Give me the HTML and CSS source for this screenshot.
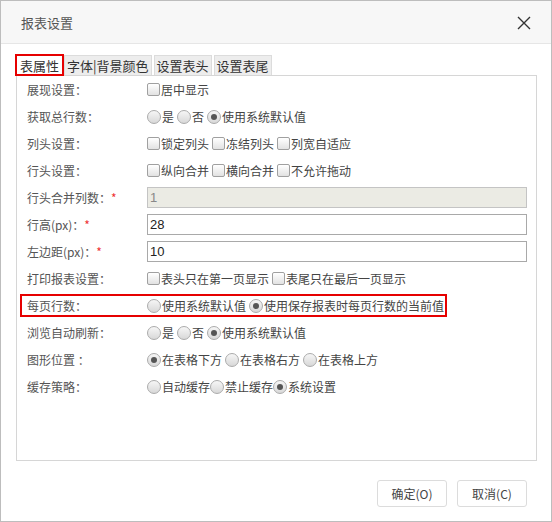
FILE: index.html
```html
<!DOCTYPE html>
<html lang="zh">
  <head>
    <meta charset="UTF-8" />
    <title>报表设置</title>
    <link rel="stylesheet" href="styles.css">
  </head>
  <body>
    <div class="dialog">
      <div class="header">
        <span class="title">报表设置</span>
        <svg class="close" width="14" height="14" viewBox="0 0 14 14">
          <path d="M1 1L13 13M13 1L1 13" stroke="#333" stroke-width="1.4" fill="none" />
        </svg>
      </div>

      <div class="content">
        <div class="tabs">
          <span class="tab active">表属性</span>
          <span class="tab">字体|背景颜色</span>
          <span class="tab">设置表头</span>
          <span class="tab">设置表尾</span>
        </div>

        <div class="panel">
          <div class="row">
            <span class="label">展现设置：</span>
            <span class="opt"><i class="cb"></i>居中显示</span>
          </div>
          <div class="row">
            <span class="label">获取总行数：</span>
            <span class="opt"><i class="rd"></i>是</span>
            <span class="opt"><i class="rd"></i>否</span>
            <span class="opt"><i class="rd on"></i>使用系统默认值</span>
          </div>
          <div class="row">
            <span class="label">列头设置：</span>
            <span class="opt"><i class="cb"></i>锁定列头</span>
            <span class="opt"><i class="cb"></i>冻结列头</span>
            <span class="opt"><i class="cb"></i>列宽自适应</span>
          </div>
          <div class="row">
            <span class="label">行头设置：</span>
            <span class="opt"><i class="cb"></i>纵向合并</span>
            <span class="opt"><i class="cb"></i>横向合并</span>
            <span class="opt"><i class="cb"></i>不允许拖动</span>
          </div>
          <div class="row">
            <span class="label">行头合并列数：<em>*</em></span>
            <span class="field disabled">1</span>
          </div>
          <div class="row">
            <span class="label">行高(px)：<em>*</em></span>
            <span class="field">28</span>
          </div>
          <div class="row">
            <span class="label">左边距(px)：<em>*</em></span>
            <span class="field">10</span>
          </div>
          <div class="row">
            <span class="label">打印报表设置：</span>
            <span class="opt"><i class="cb"></i>表头只在第一页显示</span>
            <span class="opt"><i class="cb"></i>表尾只在最后一页显示</span>
          </div>
          <div class="row">
            <div class="mark">
              <span class="label">每页行数：</span>
              <span class="opt"><i class="rd"></i>使用系统默认值</span>
              <span class="opt last"><i class="rd on"></i>使用保存报表时每页行数的当前值</span>
            </div>
          </div>
          <div class="row">
            <span class="label">浏览自动刷新：</span>
            <span class="opt"><i class="rd"></i>是</span>
            <span class="opt"><i class="rd"></i>否</span>
            <span class="opt"><i class="rd on"></i>使用系统默认值</span>
          </div>
          <div class="row">
            <span class="label">图形位置 ：</span>
            <span class="opt"><i class="rd on"></i>在表格下方</span>
            <span class="opt"><i class="rd"></i>在表格右方</span>
            <span class="opt"><i class="rd"></i>在表格上方</span>
          </div>
          <div class="row">
            <span class="label">缓存策略：</span>
            <span class="opt tight"><i class="rd"></i>自动缓存</span>
            <span class="opt tight"><i class="rd"></i>禁止缓存</span>
            <span class="opt tight"><i class="rd on"></i>系统设置</span>
          </div>
        </div>
      </div>

      <div class="footer">
        <button>确定(O)</button>
        <button>取消(C)</button>
      </div>
    </div>
  </body>
</html>
```

FILE: styles.css
```css
body {
  margin: 0;
  font-family: "Noto Sans CJK SC", "Noto Sans", sans-serif;
  font-size: 12px;
  color: #555;
}

.dialog {
  width: 552px;
  height: 522px;
  box-sizing: border-box;
  border: 1px solid #bdbdbd;
  display: flex;
  flex-direction: column;
  background: #fff;
}

.header {
  height: 42px;
  background: #f7f7f7;
  border-bottom: 1px solid #e6e6e6;
  display: flex;
  align-items: center;
  justify-content: space-between;
  padding: 0 20px 0 20px;
}

.title {
  font-size: 13px;
  color: #555;
}

.close {
  margin-top: 1px;
}

.content {
  padding: 10px 14px 0 14px;
}

/* pestañas */
.tabs {
  display: flex;
  gap: 2px;
  height: 21px;
  align-items: flex-end;
}

.tab {
  display: flex;
  align-items: center;
  height: 20px;
  box-sizing: border-box;
  padding: 0 2px;
  background: #ededed;
  border: 1px solid #dcdcdc;
  border-bottom: none;
  font-size: 13px;
  color: #333;
}

.tab.active {
  background: #fff;
  border: 2px solid #e60000;
  padding: 0 3px;
  height: 22px;
  margin-right: -2px;
  position: relative;
  top: 1px;
}

.panel {
  border: 1px solid #d6d6d6;
  height: 386px;
  box-sizing: border-box;
  margin-left: 1px;
  padding: 0 9px 0 10px;
}

.row {
  height: 27px;
  display: flex;
  align-items: center;
}

.label {
  width: 120px;
  flex: none;
  color: #555;
}

.label em {
  color: #e33;
  font-style: normal;
}

.opt {
  display: flex;
  align-items: center;
  margin-right: 3px;
  color: #444;
}

.opt.tight,
.opt.last {
  margin-right: 0;
}

/* checkbox y radio dibujados */
.cb {
  width: 11px;
  height: 11px;
  border: 1px solid #a0a0a0;
  border-radius: 2px;
  background: linear-gradient(#fff, #e2e2e2);
  margin-right: 1px;
}

.rd {
  width: 12px;
  height: 12px;
  border: 1px solid #ababab;
  border-radius: 50%;
  background: linear-gradient(#f6f6f6, #d8d8d8);
  margin-right: 1px;
  position: relative;
}

.rd.on::after {
  content: "";
  position: absolute;
  left: 3px;
  top: 3px;
  width: 6px;
  height: 6px;
  border-radius: 50%;
  background: #555;
}

.field {
  width: 380px;
  height: 21px;
  box-sizing: border-box;
  border: 1px solid #a9a9a9;
  padding: 0 2px;
  display: flex;
  align-items: center;
  font-family: "Liberation Sans", sans-serif;
  font-size: 13px;
  color: #222;
}

.field.disabled {
  background: #ebebe4;
  color: #888;
  border-color: #c4c4c4;
}

.mark {
  display: flex;
  align-items: center;
  height: 19px;
  border: 2px solid #e60000;
  margin-left: -7px;
  padding: 0 1px 0 5px;
}

.footer {
  flex: 1;
  display: flex;
  justify-content: flex-end;
  align-items: center;
  gap: 10px;
  padding: 4px 24px 0 0;
}

button {
  width: 70px;
  height: 27px;
  background: #fff;
  border: 1px solid #dcdcdc;
  border-radius: 3px;
  font-family: inherit;
  font-size: 12px;
  color: #444;
}
```
